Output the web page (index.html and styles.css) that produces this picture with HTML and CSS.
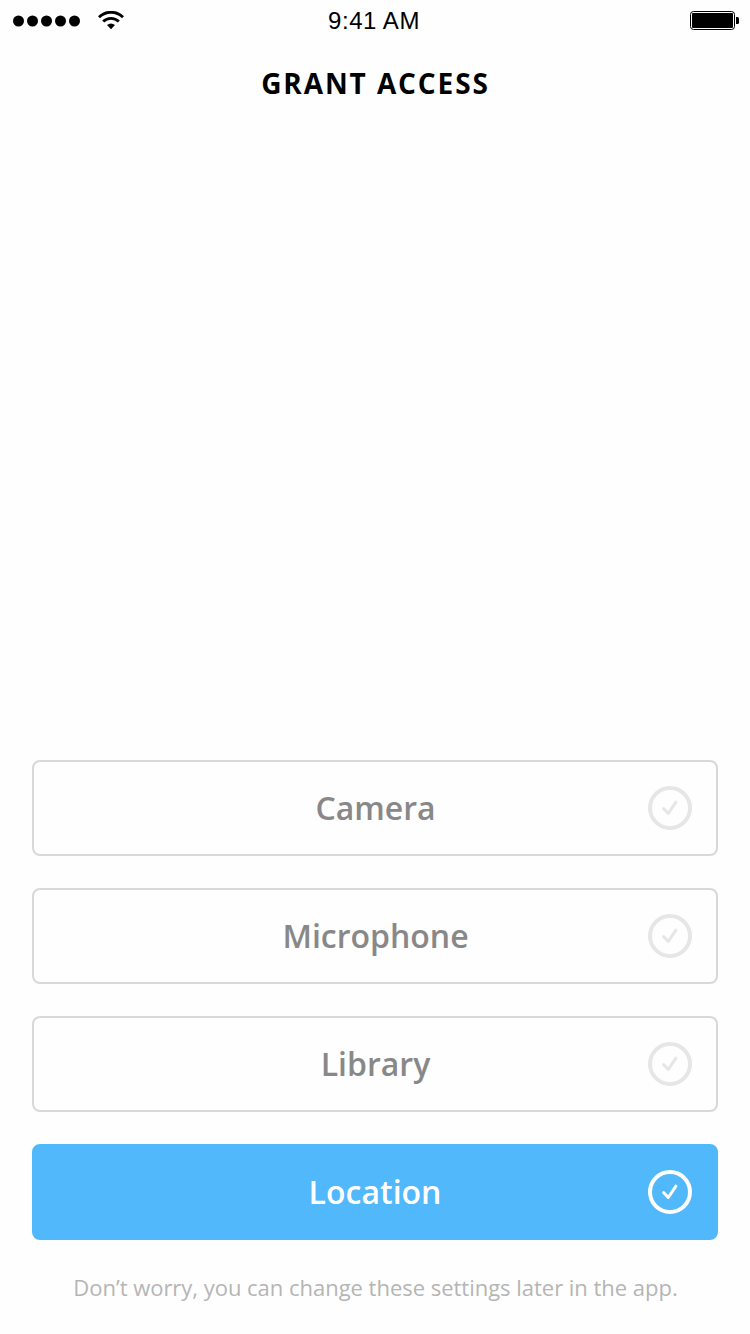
FILE: index.html
```html
<!DOCTYPE html>
<html lang="en">
<head>
<meta charset="utf-8">
<title>Grant Access</title>
<link rel="stylesheet" href="styles.css">
</head>
<body>
<main class="screen">
  <header class="status">
    <div class="signal">
      <svg class="dots" width="68" height="12" viewBox="0 0 68 12"><circle cx="5.5" cy="6" r="5.5"/><circle cx="19.5" cy="6" r="5.5"/><circle cx="33.5" cy="6" r="5.5"/><circle cx="47.5" cy="6" r="5.5"/><circle cx="61.5" cy="6" r="5.5"/></svg>
      <svg class="wifi" width="26" height="19" viewBox="0 0 26 19"><path d="M1 6.2a17 17 0 0 1 24 0M5.2 10.6a11 11 0 0 1 15.6 0" fill="none" stroke="#000" stroke-width="2.8"/><path d="M9 14.1a6.3 6.3 0 0 1 8 0L13 18.2z"/></svg>
    </div>
    <span class="time">9:41 AM</span>
    <svg class="battery" width="49" height="19" viewBox="0 0 49 19"><rect x=".5" y=".5" width="44" height="18" rx="3" fill="none" stroke="#000"/><rect x="2" y="2" width="41" height="15" rx="1"/><path d="M46 6h1.5q1.5 0 1.5 1.500v4q0 1.500-1.500 1.500H46z"/></svg>
  </header>
  <h1 class="title">GRANT ACCESS</h1>
  <section class="options">
    <button class="option"><span class="label">Camera</span><svg class="check" viewBox="0 0 44 44"><circle cx="22" cy="22" r="20"/><path d="M15.700 22.700l4.600 4.800 7.600-11.300"/></svg></button>
    <button class="option"><span class="label">Microphone</span><svg class="check" viewBox="0 0 44 44"><circle cx="22" cy="22" r="20"/><path d="M15.700 22.700l4.600 4.800 7.600-11.300"/></svg></button>
    <button class="option"><span class="label">Library</span><svg class="check" viewBox="0 0 44 44"><circle cx="22" cy="22" r="20"/><path d="M15.700 22.700l4.600 4.800 7.600-11.300"/></svg></button>
    <button class="option selected"><span class="label">Location</span><svg class="check" viewBox="0 0 44 44"><circle cx="22" cy="22" r="20"/><path d="M15.700 22.700l4.600 4.800 7.600-11.300"/></svg></button>
  </section>
  <p class="note">Don’t worry, you can change these settings later in the app.</p>
</main>
</body>
</html>
```
FILE: styles.css
```css
* { box-sizing: border-box; }
body { margin: 0; background: #fefefe; font-family: "Open Sans", sans-serif; }
.screen { width: 750px; height: 1334px; display: flex; flex-direction: column; overflow: hidden; }
.status { height: 41px; padding: 0 11px 0 13px; display: grid; grid-template-columns: 1fr auto 1fr; align-items: center; }
.signal { display: flex; align-items: center; gap: 17px; }
.time { padding: 1px 4px 0 0; font: 24px/40px "Liberation Sans", sans-serif; letter-spacing: .55px; }
.battery { justify-self: end; }
.title { margin: 22px 0 0; padding-left: 1px; font-size: 28px; line-height: 40px; font-weight: 700; letter-spacing: 1.9px; text-align: center; }
.options { margin: auto 32px 0; display: grid; gap: 32px; }
.option { height: 96px; padding: 0 24px; border: 2px solid #d8d8d8; border-radius: 8px; background: none; display: grid; grid-template-columns: 44px 1fr 44px; align-items: center; color: #888; font: 600 32px/44px "Open Sans", sans-serif; }
.label { grid-column: 2; padding-left: 1px; }
.selected .label { padding-left: 0; }
.check { width: 44px; height: 44px; fill: none; stroke: #e6e6e6; stroke-width: 4; }
.check path { stroke-width: 3; stroke-linecap: round; stroke-linejoin: round; }
.selected { background: #50b8fb; border-color: #50b8fb; color: #fff; }
.selected .check { stroke: #fff; }
.note { margin: 31px 0; padding-left: 1px; font-size: 22px; line-height: 32px; letter-spacing: -.02px; text-align: center; color: #b5b5b5; }
```
